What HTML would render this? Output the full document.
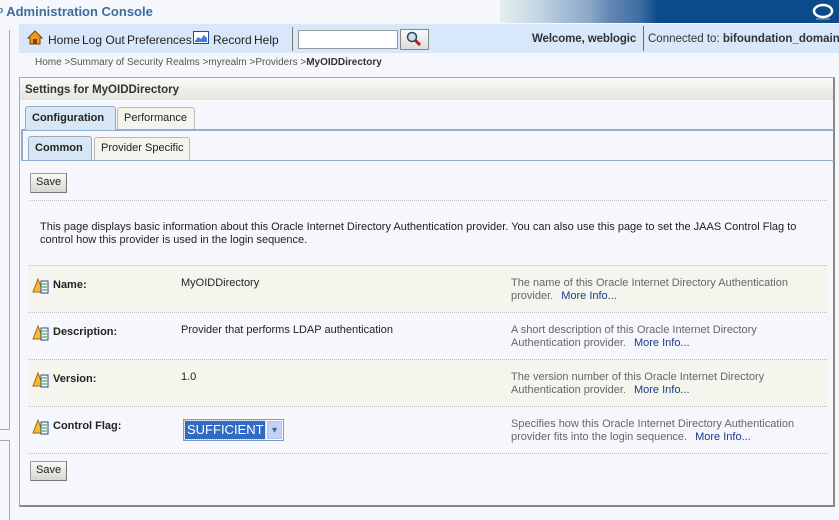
<!DOCTYPE html><html><head><style>
*{margin:0;padding:0;box-sizing:border-box}
body{width:839px;height:512px;overflow:hidden;background:#f6f7fd;font-family:"Liberation Sans",sans-serif;font-size:11px;color:#222;position:relative}
.a{position:absolute;white-space:nowrap}
.t{position:absolute;top:33px;font-size:12px;white-space:nowrap}
.btn{position:absolute;background:linear-gradient(#f8f8f4,#d8d8d0);border:1px solid #999;border-right-color:#777;border-bottom-color:#777;font-size:11px;padding:2px 5px;height:19px}
.row{position:absolute;left:28px;width:799px;height:47px;border-top:1px dotted #bbb}
.lbl{position:absolute;left:25px;top:13px;font-weight:bold}
.val{position:absolute;left:153px;top:11px}
.ds{position:absolute;left:483px;top:11px;color:#666;line-height:13px;white-space:nowrap}
.ds b{font-weight:normal;color:#1a3a8c;margin-left:8px}
.ic{position:absolute;left:4px;top:12px;width:17px;height:16px}
</style></head><body>
<div class="a" style="left:0;top:0;width:839px;height:23px;background:linear-gradient(90deg,#f6f7fd 0,#f6f7fd 500px,#e6eef0 500px,#d5e3ea 520px,#c2d3e3 540px,#a9bfd6 560px,#8ca7c8 590px,#6287b3 610px,#3d6ea3 640px,#0b4b8c 658px,#0b4b8c 839px)"></div>
<svg class="a" style="left:812px;top:2px" width="22" height="19"><ellipse cx="11" cy="9" rx="9" ry="6" fill="none" stroke="#fff" stroke-width="2.5"/><line x1="4" y1="17" x2="18" y2="17" stroke="#9bb" stroke-width="1"/></svg>
<div class="a" style="left:-2px;top:4px;font-size:13px;font-weight:bold;color:#3b6e9c">ᵖ Administration Console</div>
<div class="a" style="left:0;top:30px;width:10px;height:400px;border:1px solid #aaa;border-left:none;border-top:none"></div>
<div class="a" style="left:0;top:440px;width:10px;height:80px;border:1px solid #aaa;border-left:none;border-bottom:none"></div>
<div class="a" style="left:19px;top:24px;width:820px;height:29px;background:#d9e7fb"></div>
<svg class="a" style="left:27px;top:30px" width="16" height="15"><path d="M8 1 L1 8 H3 V14 H13 V8 H15 Z" fill="#f29a1e" stroke="#7a4300"/><rect x="6" y="9" width="4" height="5" fill="#7a4300"/></svg>
<div class="t" style="left:48px">Home</div>
<div class="t" style="left:82px">Log Out</div>
<div class="t" style="left:127px">Preferences</div>
<svg class="a" style="left:193px;top:31px" width="16" height="13"><rect x=".5" y=".5" width="15" height="12" fill="#fff" stroke="#1f4f9a"/><path d="M2 10 L5 6 L8 8 L11 4 L14 7 V11 H2Z" fill="#3b82d8"/></svg>
<div class="t" style="left:213px">Record</div>
<div class="t" style="left:254px">Help</div>
<div class="a" style="left:292px;top:27px;width:1px;height:24px;background:#777"></div>
<div class="a" style="left:298px;top:30px;width:100px;height:19px;background:#fff;border:1px solid #999"></div>
<div class="a" style="left:400px;top:29px;width:29px;height:21px;background:linear-gradient(#fafafa,#ddd);border:1px solid #888"></div>
<svg class="a" style="left:406px;top:31px" width="16" height="16"><circle cx="6" cy="6" r="4.5" fill="#cde" stroke="#345" stroke-width="1.5"/><line x1="9" y1="9" x2="14" y2="14" stroke="#a22" stroke-width="3"/></svg>
<div class="t" style="left:532px;font-size:11.5px;font-weight:bold;color:#333;letter-spacing:-0.1px">Welcome, weblogic</div>
<div class="a" style="left:643px;top:26px;width:1px;height:25px;background:#666"></div>
<div class="t" style="left:648px;font-size:11.5px;color:#333">Connected to: <b>bifoundation_domain</b></div>
<div class="a" style="left:35px;top:57px;font-size:10px;color:#555">Home &gt;Summary of Security Realms &gt;myrealm &gt;Providers &gt;<b style="color:#333">MyOIDDirectory</b></div>
<div class="a" style="left:19px;top:77px;width:816px;height:430px;border:1px solid #aaa;border-right:2px solid #888;border-bottom:2px solid #888;background:#f6f7fd"></div>
<div class="a" style="left:20px;top:78px;width:813px;height:22px;background:linear-gradient(#fbfbf6,#f0f0ea 50%,#e4e4e0)"></div>
<div class="a" style="left:25px;top:84px;font-weight:bold;font-size:11.5px;color:#333">Settings for MyOIDDirectory</div>
<div class="a" style="left:21px;top:129px;width:813px;height:2px;background:#8fb0d0"></div>
<div class="a" style="left:25px;top:106px;width:91px;height:24px;background:#d6e6f4;border:1px solid #9ab;border-bottom:none;border-radius:3px 3px 0 0"></div>
<div class="a" style="left:32px;top:112px;font-weight:bold">Configuration</div>
<div class="a" style="left:117px;top:107px;width:78px;height:22px;background:#f4f4ec;border:1px solid #bbb;border-bottom:none;border-radius:3px 3px 0 0"></div>
<div class="a" style="left:124px;top:112px">Performance</div>
<div class="a" style="left:21px;top:131px;width:2px;height:30px;background:#8fb0d0"></div>
<div class="a" style="left:21px;top:160px;width:813px;height:1px;background:#8fb0d0"></div>
<div class="a" style="left:28px;top:136px;width:64px;height:24px;background:#d6e6f4;border:1px solid #9ab;border-bottom:none;border-radius:3px 3px 0 0"></div>
<div class="a" style="left:35px;top:142px;font-weight:bold">Common</div>
<div class="a" style="left:94px;top:137px;width:96px;height:23px;background:#f4f4ec;border:1px solid #bbb;border-bottom:none;border-radius:3px 3px 0 0"></div>
<div class="a" style="left:101px;top:142px">Provider Specific</div>
<div class="btn" style="left:30px;top:173px;width:37px;height:20px">Save</div>
<div class="a" style="left:30px;top:200px;width:797px;border-top:1px dotted #bbb"></div>
<div class="a" style="left:40px;top:221px;line-height:13px;color:#222">This page displays basic information about this Oracle Internet Directory Authentication provider. You can also use this page to set the JAAS Control Flag to<br>control how this provider is used in the login sequence.</div>
<div class="row" style="top:265px;background:#f5f5ee"><svg class="ic" viewBox="0 0 17 16"><path d="M6 1 L11 14 H1Z" fill="#f6b93b" stroke="#a56a00"/><rect x="9" y="3" width="7" height="12" fill="#fff" stroke="#1e4a8a"/><path d="M10 6h5M10 9h5M10 12h5" stroke="#2a8a4a"/></svg><div class="lbl">Name:</div><div class="val">MyOIDDirectory</div><div class="ds">The name of this Oracle Internet Directory Authentication<br>provider.<b>More Info...</b></div></div>
<div class="row" style="top:312px"><svg class="ic" viewBox="0 0 17 16"><path d="M6 1 L11 14 H1Z" fill="#f6b93b" stroke="#a56a00"/><rect x="9" y="3" width="7" height="12" fill="#fff" stroke="#1e4a8a"/><path d="M10 6h5M10 9h5M10 12h5" stroke="#2a8a4a"/></svg><div class="lbl">Description:</div><div class="val">Provider that performs LDAP authentication</div><div class="ds">A short description of this Oracle Internet Directory<br>Authentication provider.<b>More Info...</b></div></div>
<div class="row" style="top:359px;background:#f5f5ee"><svg class="ic" viewBox="0 0 17 16"><path d="M6 1 L11 14 H1Z" fill="#f6b93b" stroke="#a56a00"/><rect x="9" y="3" width="7" height="12" fill="#fff" stroke="#1e4a8a"/><path d="M10 6h5M10 9h5M10 12h5" stroke="#2a8a4a"/></svg><div class="lbl">Version:</div><div class="val">1.0</div><div class="ds">The version number of this Oracle Internet Directory<br>Authentication provider.<b>More Info...</b></div></div>
<div class="row" style="top:406px"><svg class="ic" viewBox="0 0 17 16"><path d="M6 1 L11 14 H1Z" fill="#f6b93b" stroke="#a56a00"/><rect x="9" y="3" width="7" height="12" fill="#fff" stroke="#1e4a8a"/><path d="M10 6h5M10 9h5M10 12h5" stroke="#2a8a4a"/></svg><div class="lbl" style="top:13px">Control Flag:</div><div class="ds">Specifies how this Oracle Internet Directory Authentication<br>provider fits into the login sequence.<b>More Info...</b></div></div>
<div class="a" style="left:183px;top:419px;width:101px;height:22px;border:1px solid #7f9db9;background:#fff"></div>
<div class="a" style="left:185px;top:421px;width:80px;height:18px;background:#316ac5;color:#fff;font-size:13px;padding:1px 2px;outline:1px dotted #fc0">SUFFICIENT</div>
<div class="a" style="left:267px;top:421px;width:15px;height:18px;background:#c1d3fb;border:1px solid #b0c4ee;color:#4d6185;font-size:10px;text-align:center;line-height:17px">▾</div>
<div class="a" style="left:28px;top:453px;width:799px;border-top:1px dotted #bbb"></div>
<div class="btn" style="left:30px;top:461px;width:37px;height:20px">Save</div>
</body></html>
